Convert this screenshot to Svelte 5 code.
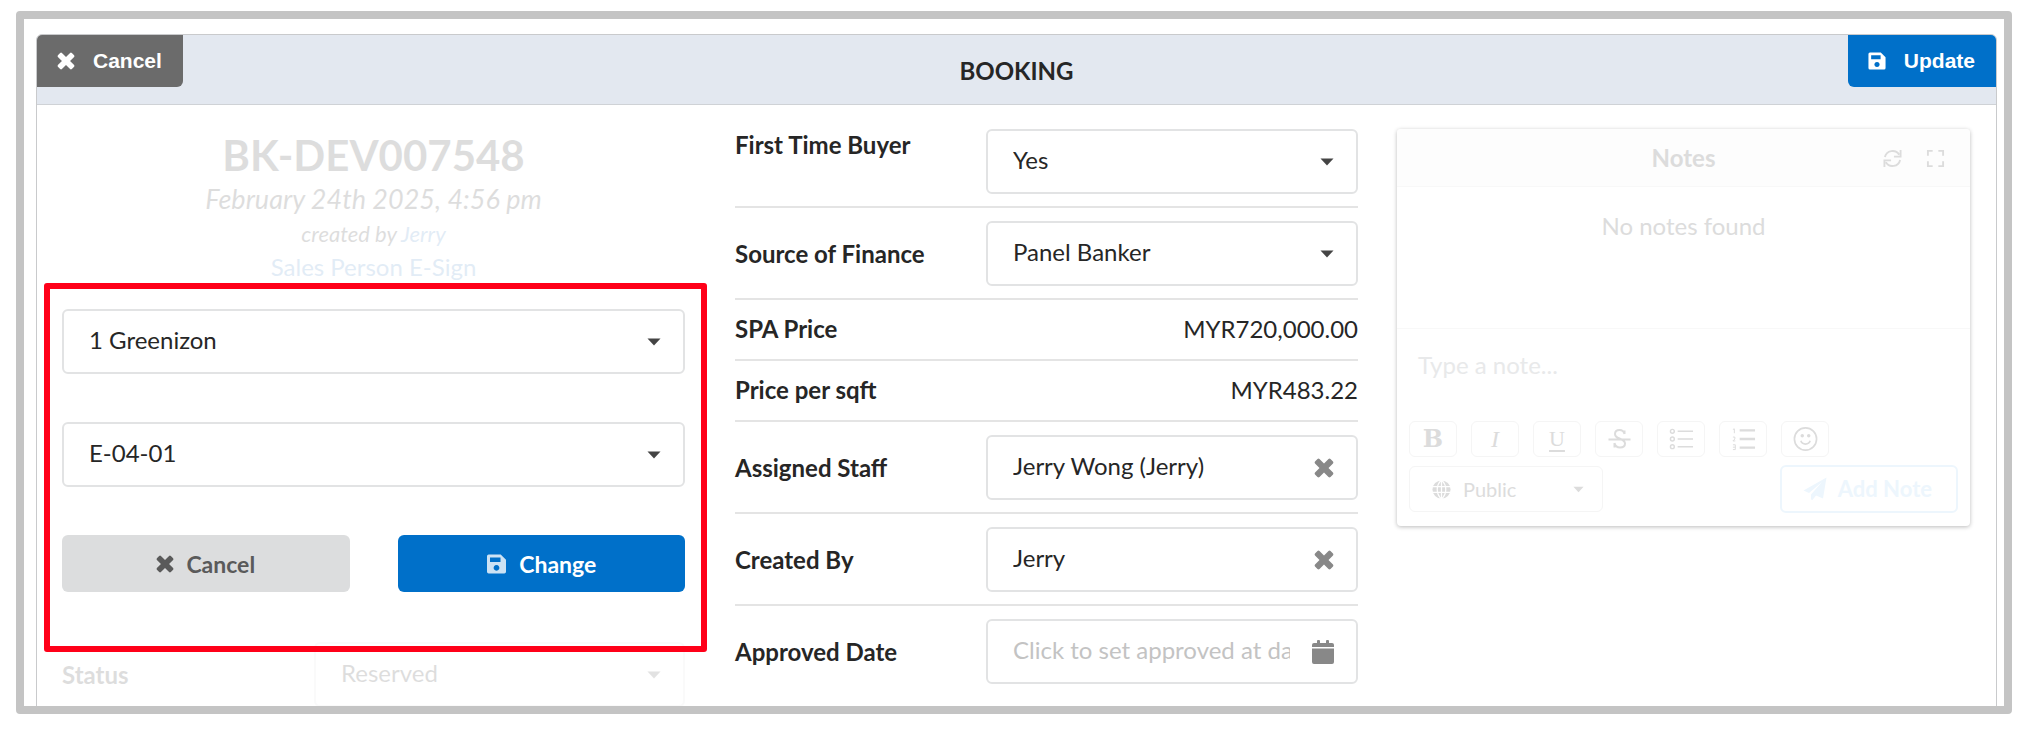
<script lang="ts">
    let buyer = 'Yes';
    let finance = 'Panel Banker';
    let project = '1 Greenizon';
    let unit = 'E-04-01';
    let status = 'Reserved';
    let visibility = 'Public';
    let assignedStaff = 'Jerry Wong (Jerry)';
    let createdBy = 'Jerry';
    let approvedDate = '';
    let note = '';
</script>

{#snippet caret()}
    <svg class="caret" viewBox="0 0 14 8" aria-hidden="true"><path d="M0.5 0.5h13L7 7.5z" /></svg>
{/snippet}

{#snippet cross()}
    <svg class="icon" viewBox="0 0 20 20" aria-hidden="true">
        <path d="M5.500 1 10 5.500l4.500-4.500q1-.8 2 0l2.500 2.500q.8 1 0 2L14.500 10l4.500 4.500q.8 1 0 2L16.500 19q-1 .8-2 0L10 14.500 5.500 19q-1 .8-2 0L1 16.500q-.8-1 0-2L5.500 10 1 5.500q-.8-1 0-2L3.500 1q1-.8 2 0z" />
    </svg>
{/snippet}

{#snippet save()}
    <svg class="icon" viewBox="0 0 20 20" aria-hidden="true">
        <path fill-rule="evenodd" d="M2.200.500h12L19.500 5.800v12q0 1.700-1.700 1.700H2.200Q.5 19.500.5 17.800V2.200Q.5.500 2.200.500zM3.500 3.500v4.500h10.500V3.500zM10 11a2.900 2.900 0 1 0 .01 0z" />
    </svg>
{/snippet}

<div class="frame">
    <main class="panel">
        <header>
            <button class="head-button dismiss">{@render cross()}Cancel</button>
            <h1>BOOKING</h1>
            <button class="head-button update">{@render save()}Update</button>
        </header>

        <div class="columns">
            <section class="summary">
                <div class="title faded">
                    <h2>BK-DEV007548</h2>
                    <p class="date">February 24th 2025, 4:56 pm</p>
                    <p class="author">created by <a href="#jerry">Jerry</a></p>
                    <p><a href="#esign">Sales Person E-Sign</a></p>
                </div>

                <form class="change-unit">
                    <div class="field">
                        <select aria-label="Project" bind:value={project}>
                            <option>1 Greenizon</option>
                        </select>
                        {@render caret()}
                    </div>
                    <div class="field">
                        <select aria-label="Unit" bind:value={unit}>
                            <option>E-04-01</option>
                        </select>
                        {@render caret()}
                    </div>
                    <div class="buttons">
                        <button type="button">{@render cross()}Cancel</button>
                        <button type="button" class="primary">{@render save()}Change</button>
                    </div>
                </form>

                <div class="status faded">
                    <label for="status">Status</label>
                    <div class="field">
                        <select id="status" bind:value={status}>
                            <option>Reserved</option>
                        </select>
                        {@render caret()}
                    </div>
                </div>
            </section>

            <section class="details">
                <div class="row first">
                    <label for="buyer">First Time Buyer</label>
                    <div class="field">
                        <select id="buyer" bind:value={buyer}>
                            <option>Yes</option>
                            <option>No</option>
                        </select>
                        {@render caret()}
                    </div>
                </div>
                <div class="row">
                    <label for="finance">Source of Finance</label>
                    <div class="field">
                        <select id="finance" bind:value={finance}>
                            <option>Panel Banker</option>
                        </select>
                        {@render caret()}
                    </div>
                </div>
                <div class="row plain">
                    <strong>SPA Price</strong>
                    <span>MYR720,000.00</span>
                </div>
                <div class="row plain">
                    <strong>Price per sqft</strong>
                    <span>MYR483.22</span>
                </div>
                <div class="row">
                    <label for="staff">Assigned Staff</label>
                    <div class="field">
                        <input id="staff" type="text" bind:value={assignedStaff} />
                        <button class="field-button" aria-label="Clear assigned staff" on:click={() => assignedStaff = ''}>
                            {@render cross()}
                        </button>
                    </div>
                </div>
                <div class="row">
                    <label for="creator">Created By</label>
                    <div class="field">
                        <input id="creator" type="text" bind:value={createdBy} />
                        <button class="field-button" aria-label="Clear created by" on:click={() => createdBy = ''}>
                            {@render cross()}
                        </button>
                    </div>
                </div>
                <div class="row">
                    <label for="approved">Approved Date</label>
                    <div class="field">
                        <input id="approved" type="text" placeholder="Click to set approved at date" bind:value={approvedDate} />
                        <button class="field-button" aria-label="Pick a date">
                            <svg class="calendar" viewBox="0 0 22 24" aria-hidden="true">
                                <path d="M0 7V5q0-2 2-2h3V1q0-1 1-1h1q1 0 1 1v2h6V1q0-1 1-1h1q1 0 1 1v2h3q2 0 2 2v2zM0 8.500h22V22q0 2-2 2H2q-2 0-2-2z" />
                            </svg>
                        </button>
                    </div>
                </div>
            </section>

            <section class="side">
                <div class="notes">
                    <div class="notes-head">
                        <h3>Notes</h3>
                        <div class="notes-tools">
                            <button aria-label="Refresh">
                                <svg class="icon" viewBox="0 0 20 20" fill="none" stroke="currentColor" stroke-width="2" aria-hidden="true">
                                    <path d="M2 8.500A8.200 8.200 0 0 1 17 6M18.500 1v7h-7M18 11.500A8.200 8.200 0 0 1 3 14M1.500 19v-7h7" />
                                </svg>
                            </button>
                            <button aria-label="Expand">
                                <svg class="icon" viewBox="0 0 20 20" fill="none" stroke="currentColor" stroke-width="2" aria-hidden="true">
                                    <path d="M2 7V2h5M13 2h5v5M18 13v5h-5M7 18H2v-5" />
                                </svg>
                            </button>
                        </div>
                    </div>
                    <p class="empty">No notes found</p>
                    <textarea aria-label="Note" placeholder="Type a note..." bind:value={note}></textarea>
                    <div class="format">
                        <button class="bold">B</button>
                        <button class="italic">I</button>
                        <button class="underline">U</button>
                        <button class="strike" aria-label="Strikethrough">
                            <svg viewBox="0 0 24 24" aria-hidden="true">
                                <path fill="none" stroke="currentColor" stroke-width="2" d="M17 7V3.500M17 7Q16 3 12 3 7.500 3 7.500 7q0 3 4.500 4.500 5.500 2 5.500 5 0 4-5 4-4.500 0-5.500-4.500M7 20.500V16M1 12.500h22" />
                            </svg>
                        </button>
                        <button aria-label="Bulleted list">
                            <svg viewBox="0 0 26 24" fill="none" stroke="currentColor" stroke-width="1.500" aria-hidden="true">
                                <circle cx="3.500" cy="4" r="2" /><circle cx="3.500" cy="12" r="2" /><circle cx="3.500" cy="20" r="2" />
                                <path d="M9 4h16M9 12h16M9 20h16" />
                            </svg>
                        </button>
                        <button aria-label="Numbered list">
                            <svg viewBox="0 0 26 24" fill="none" stroke="currentColor" aria-hidden="true">
                                <path stroke-width="2.500" d="M9 3h16M9 12h16M9 21h16" />
                                <path d="M2 2l1.500-.5V6M2 10h2v2L2 14h2.500M2 18h2.500v5H2M2 20.500h2.500" />
                            </svg>
                        </button>
                        <button aria-label="Emoji">
                            <svg viewBox="0 0 26 26" fill="none" stroke="currentColor" stroke-width="1.800" aria-hidden="true">
                                <circle cx="13" cy="13" r="12" />
                                <path d="M8 15q1 3.500 5 3.500t5-3.500" />
                                <circle cx="9.500" cy="9.500" r="1" /><circle cx="16.500" cy="9.500" r="1" />
                            </svg>
                        </button>
                    </div>
                    <div class="submit">
                        <div class="visibility">
                            <svg class="icon" viewBox="0 0 20 20" aria-hidden="true">
                                <circle cx="10" cy="10" r="9.500" />
                                <path fill="none" stroke="#fff" stroke-width="1.300" d="M0 7h20M0 13h20M10 0v20M10 0Q5.500 4 5.500 10t4.500 10q4.500-4 4.500-10T10 0" />
                            </svg>
                            <select aria-label="Visibility" bind:value={visibility}>
                                <option>Public</option>
                                <option>Private</option>
                            </select>
                            {@render caret()}
                        </div>
                        <button class="add-note">
                            <svg viewBox="0 0 24 24" aria-hidden="true">
                                <path d="M23.500.500 20 21.500l-7-3-3.500 4.500-1.500-.5v-5L19 5 6 16 .5 13.500z" />
                            </svg>
                            Add Note
                        </button>
                    </div>
                </div>
            </section>
        </div>
    </main>
</div>

<style>
    :global(body) {
        background: #fff;
    }

    .frame,
    .frame * {
        box-sizing: border-box;
    }

    .frame {
        height: calc(100vh - 39px);
        margin: 11px 12px 0 16px;
        padding: 15px 7px 0 12px;
        border: 8px solid #c4c4c4;
        border-radius: 4px;
        overflow-y: auto;
        scrollbar-width: none;
        color: #262626;
        font-family: Lato, sans-serif;
        font-size: 24px;
        line-height: 32px;
    }

    button,
    input,
    select,
    textarea {
        font: inherit;
        color: inherit;
    }

    button {
        display: flex;
        align-items: center;
        justify-content: center;
        padding: 0;
        border: 0;
        background: none;
        cursor: pointer;
    }

    h1,
    h2,
    h3,
    p {
        margin: 0;
        font-size: inherit;
    }

    a {
        color: #4183c4;
        text-decoration: none;
    }

    svg {
        flex: none;
        fill: currentColor;
    }

    svg[fill='none'] {
        fill: none;
    }

    .icon {
        width: 20px;
        height: 20px;
    }

    .caret {
        width: 14px;
        height: 8px;
        color: #444;
    }

    .panel {
        border: 1px solid #c9cacc;
        border-radius: 6px;
    }

    header {
        display: grid;
        grid-template-columns: 1fr auto 1fr;
        align-items: start;
        background: #e3e8f0;
        border-bottom: 1px solid #cfd2d6;
        border-radius: 6px 6px 0 0;
    }

    h1 {
        padding: 20px 0 17px;
        font-weight: bold;
    }

    .head-button {
        height: 52px;
        gap: 18px;
        color: #fff;
        font-family: 'Liberation Sans', Arial, sans-serif;
        font-size: 21px;
        font-weight: bold;
    }

    .head-button .icon {
        width: 18px;
        height: 18px;
    }

    .dismiss {
        justify-self: start;
        padding: 0 21px 0 20px;
        background: #6b6b6b;
        border-radius: 5px 0 6px 0;
    }

    .update {
        justify-self: end;
        padding: 0 21px 0 20px;
        background: #0070c9;
        border-radius: 0 5px 0 6px;
    }

    .columns {
        display: grid;
        grid-template-columns: minmax(0, 673fr) minmax(0, 673fr) minmax(0, 613fr);
        align-items: start;
        padding-top: 24px;
    }

    .summary {
        padding: 0 25px;
    }

    .details {
        padding: 0 25px 22px;
    }

    .side {
        padding: 0 26px 24px 14px;
    }

    .faded {
        opacity: 0.15;
    }

    .title {
        text-align: center;
    }

    h2 {
        font-size: 42px;
        line-height: 52px;
    }

    .date {
        font-size: 27px;
        line-height: 36px;
        font-style: italic;
    }

    .author {
        font-size: 22px;
        line-height: 34px;
        font-style: italic;
    }

    .field {
        display: flex;
        align-items: center;
        height: 65px;
        min-width: 0;
        padding-right: 22px;
        background: #fff;
        border: 2px solid #e2e3e4;
        border-radius: 6px;
    }

    select {
        appearance: none;
        flex: 1;
        min-width: 0;
        border: 0;
        background: none;
        outline: none;
    }

    .field select,
    .field input {
        flex: 1;
        min-width: 0;
        height: 36px;
        padding: 0 0 4px 25px;
        border: 0;
        background: none;
        outline: none;
    }

    input::placeholder {
        color: #c3c3c3;
        opacity: 1;
    }

    .field-button {
        margin-left: 22px;
        color: #888;
    }

    .calendar {
        width: 22px;
        height: 24px;
    }

    .change-unit {
        position: relative;
        z-index: 1;
        margin: 0 -22px 0 -18px;
        padding: 20px 16px 54px 12px;
        border: 6px solid #ff0019;
        border-radius: 3px;
    }

    .change-unit .field {
        margin-bottom: 48px;
    }

    .buttons {
        display: grid;
        grid-template-columns: 1fr 1fr;
        gap: 48px;
    }

    .buttons button {
        height: 57px;
        gap: 12px;
        background: #dcddde;
        border-radius: 6px;
        color: #5a5a5a;
        font-size: 23px;
        font-weight: bold;
    }

    .buttons .primary {
        background: #0070c9;
        color: #fff;
    }

    .buttons .icon {
        width: 18px;
        height: 18px;
    }

    .buttons .primary .icon {
        width: 21px;
        height: 20px;
        opacity: 0.8;
    }

    .status {
        display: grid;
        grid-template-columns: 252px minmax(0, 1fr);
        align-items: center;
        margin-top: -10px;
    }

    label,
    strong {
        font-weight: bold;
    }

    .row {
        display: grid;
        grid-template-columns: 251px minmax(0, 1fr);
        align-items: center;
        padding: 13px 0 12px;
        border-bottom: 2px solid #e4e4e4;
    }

    .row:last-child {
        border-bottom: 0;
    }

    .row.first {
        align-items: start;
        padding-top: 0;
    }

    .row.plain {
        padding: 13px 0 14px;
    }

    .plain span {
        text-align: right;
    }

    .notes {
        border-radius: 4px;
        color: #dcdcdc;
        box-shadow: 0 1px 4px #bbb;
    }

    .notes-head {
        display: grid;
        grid-template-columns: 1fr auto 1fr;
        align-items: center;
        padding: 13px 25px 12px;
        background: #fdfdfd;
        border-bottom: 1px solid #f8f8f8;
        border-radius: 4px 4px 0 0;
    }

    h3 {
        grid-column: 2;
    }

    .notes-tools {
        display: flex;
        justify-content: end;
        gap: 24px;
    }

    .notes-tools .icon {
        width: 19px;
        height: 19px;
    }

    .empty {
        height: 142px;
        padding-top: 23px;
        border-bottom: 1px solid #f8f8f8;
        text-align: center;
    }

    textarea {
        display: block;
        width: 100%;
        height: 92px;
        padding: 20px 21px;
        border: 0;
        background: none;
        resize: none;
        outline: none;
    }

    textarea::placeholder {
        color: #e8e9ea;
        opacity: 1;
    }

    .format {
        display: flex;
        gap: 14px;
        padding: 0 12px;
    }

    .format button {
        width: 48px;
        height: 36px;
        border: 1px solid #f5f5f5;
        border-radius: 6px;
        font-family: 'DejaVu Serif', serif;
        font-size: 22px;
    }

    .format svg {
        width: 25px;
        height: 24px;
    }

    .format .bold {
        font-size: 24px;
        font-weight: bold;
    }

    .format .italic {
        font-family: 'Liberation Serif', serif;
        font-size: 24px;
        font-style: italic;
    }

    .format .underline {
        font-family: 'Liberation Serif', serif;
        text-decoration: underline;
        text-underline-offset: 4px;
    }

    .submit {
        display: flex;
        align-items: center;
        justify-content: space-between;
        padding: 8px 12px 13px;
    }

    .visibility {
        display: flex;
        align-items: center;
        width: 194px;
        height: 46px;
        padding: 0 18px 0 22px;
        border: 1px solid #f5f5f5;
        border-radius: 6px;
        font-size: 20px;
    }

    .visibility select {
        padding-left: 12px;
    }

    .visibility .caret {
        width: 11px;
        height: 7px;
        color: inherit;
    }

    .visibility .icon {
        width: 19px;
        height: 19px;
    }

    .add-note {
        height: 48px;
        gap: 11px;
        padding: 0 24px 0 21px;
        border: 2px solid #edf6fd;
        border-radius: 6px;
        color: #edf6fd;
        font-size: 22px;
        font-weight: bold;
    }

    .add-note svg {
        width: 24px;
        height: 24px;
    }
</style>
